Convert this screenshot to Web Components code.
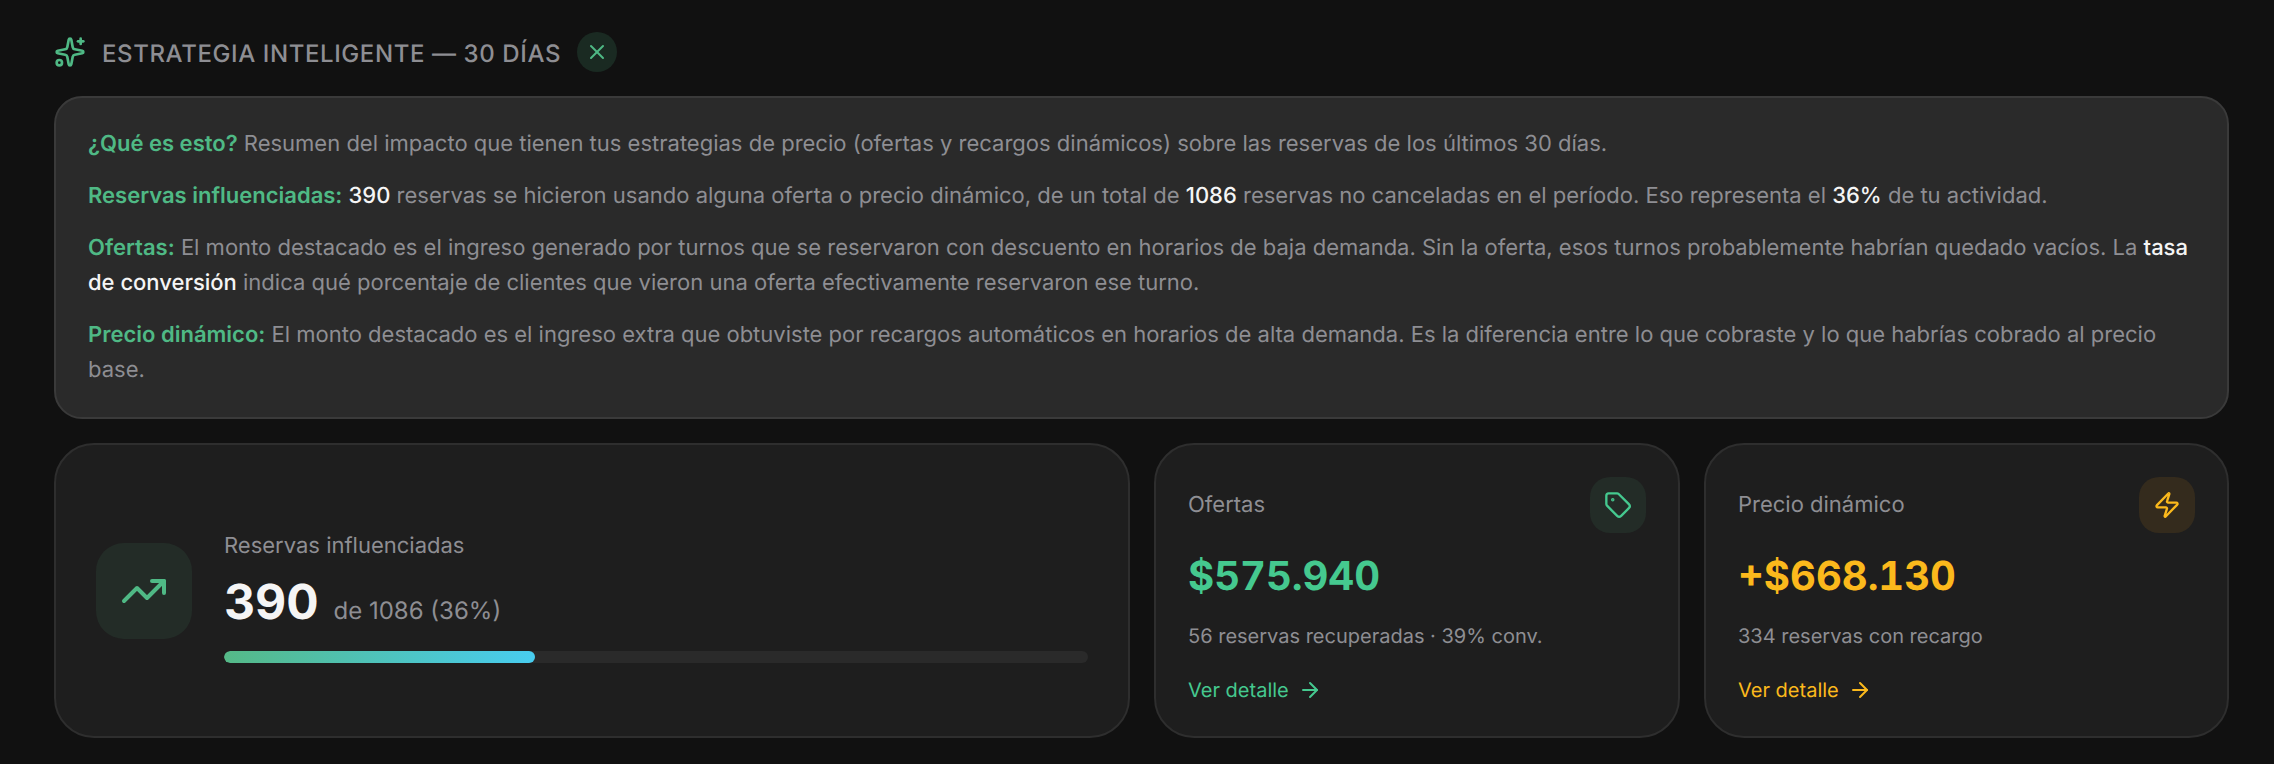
<!DOCTYPE html>
<html lang="es">
<head>
<meta charset="utf-8">
<title>Estrategia inteligente</title>
<style>
  html, body { margin: 0; background: #111111; }
  body { font-family: "Inter", "Liberation Sans", sans-serif; color: #8e8e93; text-rendering: geometricPrecision; }
  info-panel b { color: #4fb985; font-weight: 600; }
  info-panel i { color: #f5f5f5; font-style: normal; font-weight: 500; }
</style>
</head>
<body>
<strategy-page>
  <strategy-header slot="header">ESTRATEGIA INTELIGENTE — 30 DÍAS</strategy-header>
  <info-panel slot="info">
    <p><b>¿Qué es esto?</b> Resumen del impacto que tienen tus estrategias de precio (ofertas y recargos dinámicos) sobre las reservas de los últimos 30 días.</p>
    <p><b>Reservas influenciadas:</b> <i>390</i> reservas se hicieron usando alguna oferta o precio dinámico, de un total de <i>1086</i> reservas no canceladas en el período. Eso representa el <i>36%</i> de tu actividad.</p>
    <p><b>Ofertas:</b> El monto destacado es el ingreso generado por turnos que se reservaron con descuento en horarios de baja demanda. Sin la oferta, esos turnos probablemente habrían quedado vacíos. La <i>tasa de conversión</i> indica qué porcentaje de clientes que vieron una oferta efectivamente reservaron ese turno.</p>
    <p><b>Precio dinámico:</b> El monto destacado es el ingreso extra que obtuviste por recargos automáticos en horarios de alta demanda. Es la diferencia entre lo que cobraste y lo que habrías cobrado al precio base.</p>
  </info-panel>
  <influence-card slot="main" label="Reservas influenciadas" value="390" detail="de 1086 (36%)" percent="36"></influence-card>
  <summary-card slot="offers" label="Ofertas" value="$575.940" detail="56 reservas recuperadas · 39% conv." icon="tag" tone="green"></summary-card>
  <summary-card slot="dynamic" label="Precio dinámico" value="+$668.130" detail="334 reservas con recargo" icon="zap" tone="amber"></summary-card>
</strategy-page>

<script>
// Lucide style icon bodies, all on a 24x24 box
const icons = {
  sparkles: `<path d="M11.017 2.814a1 1 0 0 1 1.966 0l1.051 5.558a2 2 0 0 0 1.594 1.594l5.558 1.051a1 1 0 0 1 0 1.966l-5.558 1.051a2 2 0 0 0-1.594 1.594l-1.051 5.558a1 1 0 0 1-1.966 0l-1.051-5.558a2 2 0 0 0-1.594-1.594l-5.558-1.051a1 1 0 0 1 0-1.966l5.558-1.051a2 2 0 0 0 1.594-1.594z"/><path d="M20 2v4"/><path d="M22 4h-4"/><circle cx="4" cy="20" r="2"/>`,
  x: `<path d="M18 6 6 18"/><path d="m6 6 12 12"/>`,
  trending: `<path d="M16 7h6v6"/><path d="m22 7-8.5 8.5-5-5L2 17"/>`,
  tag: `<path d="M12.586 2.586A2 2 0 0 0 11.172 2H4a2 2 0 0 0-2 2v7.172a2 2 0 0 0 .586 1.414l8.704 8.704a2.426 2.426 0 0 0 3.42 0l6.58-6.58a2.426 2.426 0 0 0 0-3.42z"/><circle cx="7.5" cy="7.5" r=".5" fill="currentColor"/>`,
  zap: `<path d="M4 14a1 1 0 0 1-.78-1.63l9.9-10.2a.5.5 0 0 1 .86.46l-1.92 6.02A1 1 0 0 0 13 10h7a1 1 0 0 1 .78 1.63l-9.9 10.2a.5.5 0 0 1-.86-.46l1.92-6.02A1 1 0 0 0 11 14z"/>`,
  arrow: `<path d="M5 12h14"/><path d="m12 5 7 7-7 7"/>`,
};

const svgIcon = (name, size) => /*html*/ `<svg width="${size}" height="${size}" viewBox="0 0 24 24" fill="none" stroke="currentColor" stroke-width="2" stroke-linecap="round" stroke-linejoin="round">${icons[name]}</svg>`;

const tones = {
  green: { color: "#45c98f", soft: "#232c27" },
  amber: { color: "#fbb91c", soft: "#342b1d" },
};

class StrategyPage extends HTMLElement {
  constructor() {
    super();
    this.attachShadow({ mode: "open" }).innerHTML = /*html*/ `
    <style>
      :host { display: block; padding: 32px 45px 26px 54px; }
      .cards { display: grid; grid-template-columns: 1076px 526px 525px; gap: 24px; }
    </style>
    <slot name="header"></slot>
    <slot name="info"></slot>
    <div class="cards">
      <slot name="main"></slot>
      <slot name="offers"></slot>
      <slot name="dynamic"></slot>
    </div>`;
  }
}

class StrategyHeader extends HTMLElement {
  constructor() {
    super();
    this.attachShadow({ mode: "open" }).innerHTML = /*html*/ `
    <style>
      :host { display: flex; align-items: center; height: 40px; margin-bottom: 24px; }
      .spark { display: flex; color: #4fb985; margin-right: 16px; }
      .title { padding-top: 2px; font-size: 24px; font-weight: 500; letter-spacing: 0.6px; color: #8e8e93; }
      button { all: unset; display: flex; align-items: center; justify-content: center; width: 40px; height: 40px; margin-left: 16px; border-radius: 50%; background: #1a2a22; color: #4fb985; }
    </style>
    <span class="spark">${svgIcon("sparkles", 32)}</span>
    <span class="title"><slot></slot></span>
    <button>${svgIcon("x", 24)}</button>`;
  }
}

class InfoPanel extends HTMLElement {
  constructor() {
    super();
    this.attachShadow({ mode: "open" }).innerHTML = /*html*/ `
    <style>
      :host { display: block; margin-bottom: 24px; padding: 29px 32px 11.6px; background: #2a2a2a; border: 2px solid #3a3a3a; border-radius: 28px; font-size: 22px; line-height: 35.2px; color: #8e8e93; }
      ::slotted(p) { margin: 0 0 16.8px; }
    </style>
    <slot></slot>`;
  }
}

class InfluenceCard extends HTMLElement {
  constructor() {
    super();
    const percent = this.getAttribute("percent");
    this.attachShadow({ mode: "open" }).innerHTML = /*html*/ `
    <style>
      :host { display: flex; align-items: center; gap: 32px; box-sizing: border-box; height: 295px; padding: 0 40px; background: #1e1e1e; border: 2px solid #2e2e2e; border-radius: 40px; }
      .badge { flex: none; display: flex; align-items: center; justify-content: center; width: 96px; height: 96px; border-radius: 28px; background: #232c27; color: #4fb985; }
      .body { flex: 1; margin-top: 12px; }
      .label { padding-bottom: 1px; margin-top: -1px; font-size: 22px; line-height: 35px; color: #8e8e93; }
      .row { display: flex; align-items: baseline; gap: 15px; margin: 8px 0 20px; }
      .value { font-size: 48px; line-height: 58px; font-weight: 700; color: #f5f5f5; }
      .detail { font-size: 24px; color: #8e8e93; }
      .track { height: 12px; border-radius: 6px; background: #2a2a2a; overflow: hidden; }
      .fill { height: 100%; width: ${percent}%; border-radius: 6px; background: linear-gradient(90deg, #55b987, #48cdf0); }
    </style>
    <div class="badge">${svgIcon("trending", 48)}</div>
    <div class="body">
      <div class="label">${this.getAttribute("label")}</div>
      <div class="row"><span class="value">${this.getAttribute("value")}</span><span class="detail">${this.getAttribute("detail")}</span></div>
      <div class="track"><div class="fill"></div></div>
    </div>`;
  }
}

class SummaryCard extends HTMLElement {
  constructor() {
    super();
    const tone = tones[this.getAttribute("tone")];
    this.attachShadow({ mode: "open" }).innerHTML = /*html*/ `
    <style>
      :host { display: flex; flex-direction: column; box-sizing: border-box; height: 295px; padding: 32px 32px 31px; background: #1e1e1e; border: 2px solid #2e2e2e; border-radius: 40px; }
      .top { display: flex; justify-content: space-between; align-items: center; height: 56px; }
      .label { padding-bottom: 1px; font-size: 22px; color: #8e8e93; }
      .badge { display: flex; align-items: center; justify-content: center; width: 56px; height: 56px; border-radius: 20px; background: ${tone.soft}; color: ${tone.color}; }
      .value { margin-top: 15px; font-size: 40px; line-height: 56px; font-weight: 700; font-variant-numeric: tabular-nums; color: ${tone.color}; }
      .detail { margin-top: 17px; font-size: 20px; line-height: 30px; color: #8e8e93; }
      .link { display: flex; align-items: center; gap: 9px; margin-top: auto; font-size: 20px; line-height: 30px; color: ${tone.color}; }
    </style>
    <div class="top"><span class="label">${this.getAttribute("label")}</span><span class="badge">${svgIcon(this.getAttribute("icon"), 28)}</span></div>
    <div class="value">${this.getAttribute("value")}</div>
    <div class="detail">${this.getAttribute("detail")}</div>
    <div class="link">Ver detalle ${svgIcon("arrow", 24)}</div>`;
  }
}

customElements.define("strategy-page", StrategyPage);
customElements.define("strategy-header", StrategyHeader);
customElements.define("info-panel", InfoPanel);
customElements.define("influence-card", InfluenceCard);
customElements.define("summary-card", SummaryCard);
</script>
</body>
</html>
